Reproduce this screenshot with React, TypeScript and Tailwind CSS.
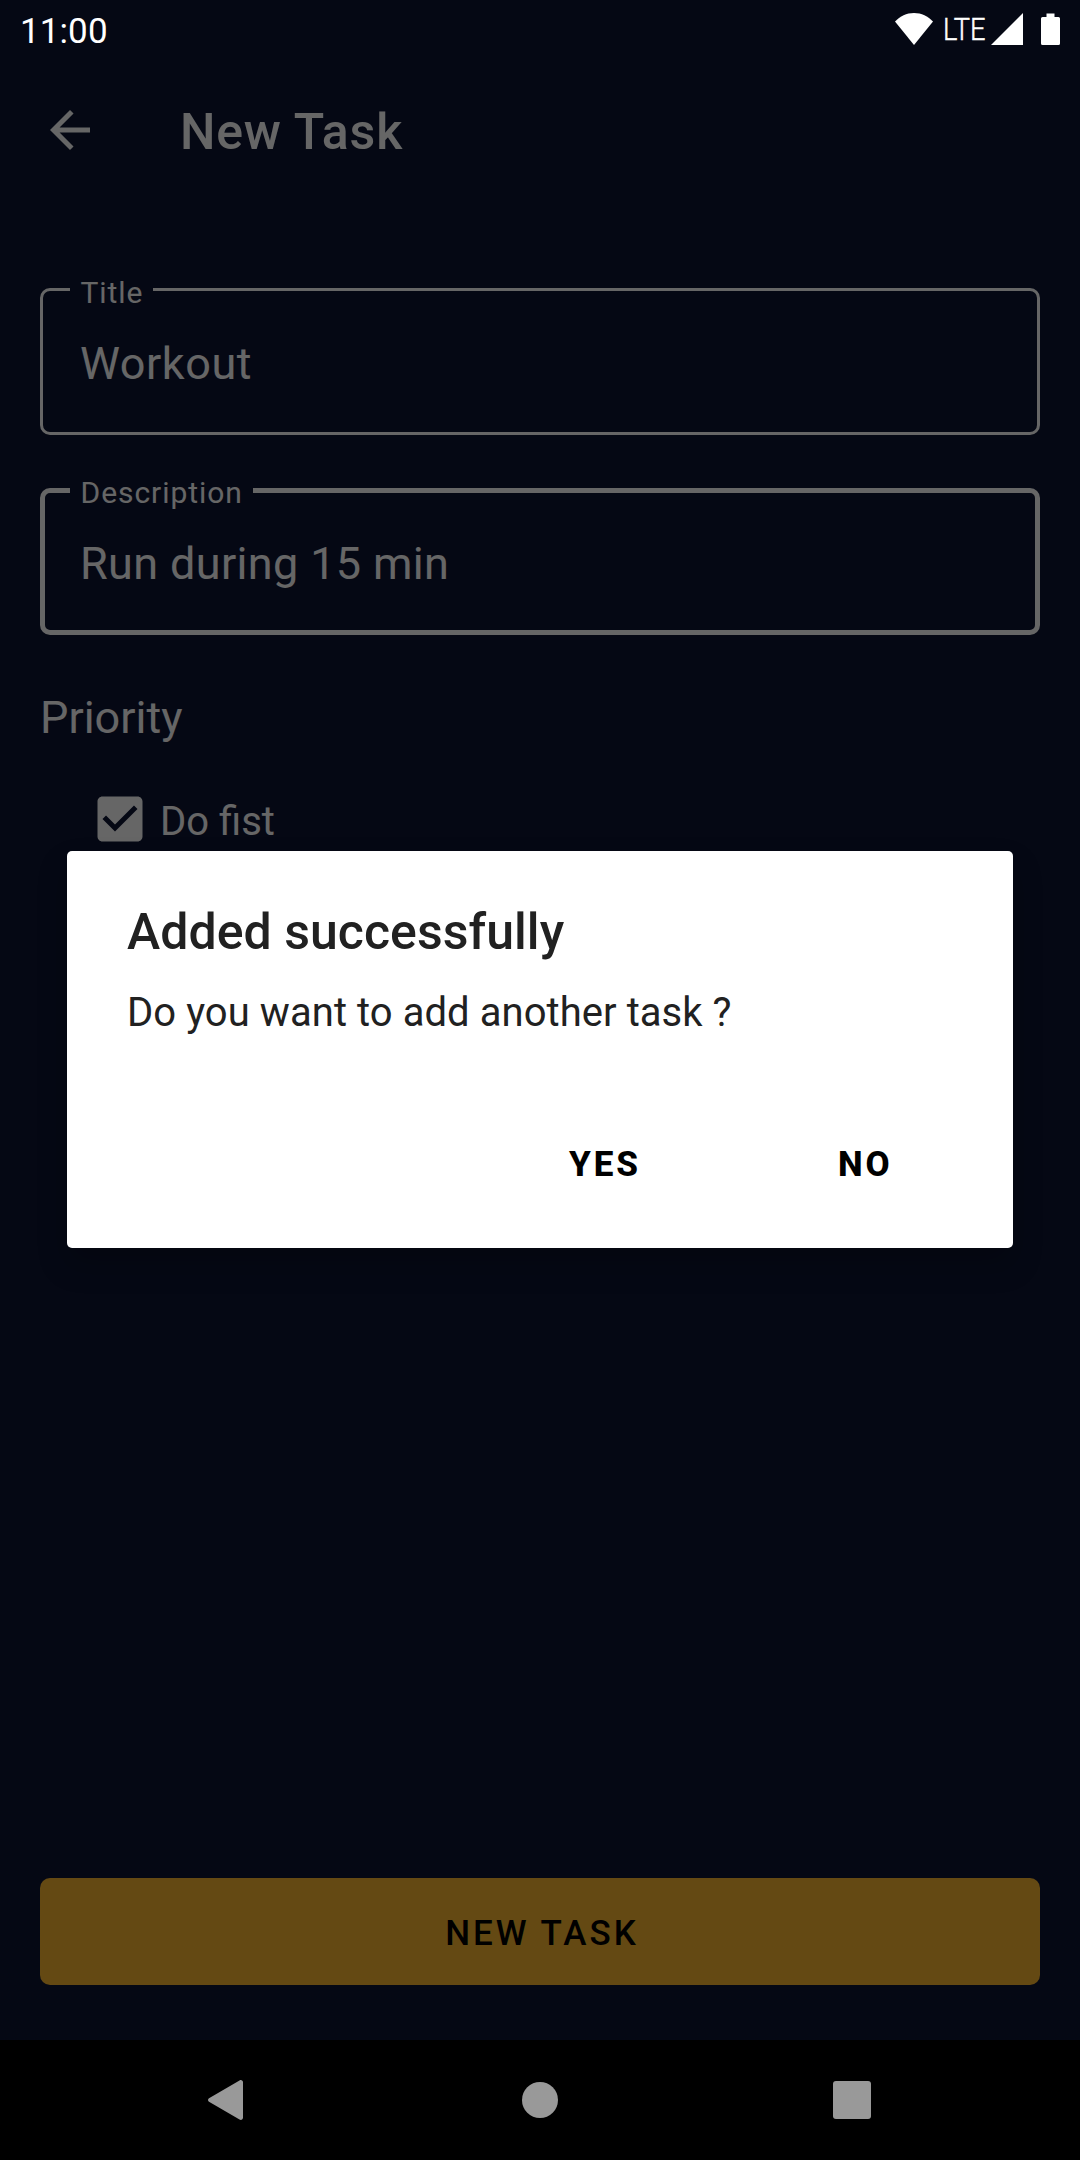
import type { ReactNode } from 'react';

function StatusBar() {
  return (
    <div className="relative z-20 flex h-[62px] items-center justify-between pl-5 pr-5 text-white">
      <span className="text-[35px] leading-[62px] tracking-[0.1px] pt-[2px]">11:00</span>
      <div className="flex h-full items-start pt-[13px]">
        <svg className="h-8 w-[38px]" viewBox="0 0 38 32" fill="currentColor">
          <path d="M19 32 0 8.6C5 3.200 11.500 0 19 0s14 3.200 19 8.600z" />
        </svg>
        <span className="ml-[10px] mr-[2px] h-8 w-[41px] whitespace-nowrap text-[32px] font-normal leading-[33px]">
          <span className="inline-block origin-left scale-x-[0.85] font-light [-webkit-text-stroke:0.5px_white]">LTE</span>
        </span>
        <svg className="ml-[5px] h-8 w-8" viewBox="0 0 32 32" fill="currentColor">
          <path d="M32 0v32H0z" />
        </svg>
        <svg className="ml-[18px] h-8 w-[19px]" viewBox="0 0 19 32" fill="currentColor">
          <path d="M5.500 0.500h8V4H17.500a1.500 1.500 0 0 1 1.500 1.500v25a1.500 1.500 0 0 1-1.500 1.500h-16A1.500 1.500 0 0 1 0 30.500v-25A1.500 1.500 0 0 1 1.500 4h4z" />
        </svg>
      </div>
    </div>
  );
}

function Field({ label, value, focused }: { label: string; value: string; focused?: boolean }) {
  return (
    <div className="relative h-[147px]">
      <div
        className={`flex h-full items-center rounded-[10px] border-white pt-1 text-[45px] leading-[53px] ${
          focused ? 'border-[5px] pl-[35px] tracking-[0.36px]' : 'border-[3px] pl-[37px] tracking-[0.55px]'
        }`}
      >
        {value}
      </div>
      <span className="absolute left-[30px] top-[-10px] bg-[#0d1433] pl-[10.5px] pr-[10px] text-[30px] leading-[30px] tracking-[0.95px]">
        {label}
      </span>
    </div>
  );
}

function DialogButton({ className, children }: { className: string; children: ReactNode }) {
  return (
    <button className={`text-[35px] font-extrabold leading-[42px] tracking-[2.9px] text-black ${className}`}>
      {children}
    </button>
  );
}

export default function App() {
  return (
    <div className="relative flex h-[2160px] w-[1080px] flex-col overflow-hidden bg-[#0d1433] font-['Roboto',sans-serif] text-white">
      <StatusBar />

      <header className="flex h-[138px] items-start pl-10">
        <svg className="mt-[38px] size-[60px]" viewBox="0 0 24 24" fill="currentColor">
          <path d="M20 11H7.830l5.590-5.590L12 4l-8 8 8 8 1.410-1.410L7.830 13H20v-2z" />
        </svg>
        <h1 className="ml-20 mt-10 text-[50px] font-medium leading-[60px] tracking-[0.8px]">New Task</h1>
      </header>

      <main className="flex flex-1 flex-col px-10 pt-[88px]">
        <div className="flex flex-col gap-[53px]">
          <Field label="Title" value="Workout" />
          <Field label="Description" value="Run during 15 min" focused />
        </div>
        <h2 className="mt-14 text-[45px] leading-[53px]">Priority</h2>
        <div className="mt-[45px] flex h-[60px] items-center pl-[50px]">
          <svg className="size-[60px]" viewBox="0 0 24 24" fill="currentColor">
            <path d="M19 3H5c-1.110 0-2 .9-2 2v14c0 1.100.89 2 2 2h14c1.110 0 2-.9 2-2V5c0-1.100-.89-2-2-2zm-9 14-5-5 1.410-1.410L10 14.170l7.590-7.590L19 8l-9 9z" />
          </svg>
          <span className="ml-[10px] pt-[5px] text-[40px] leading-[48px]">Do fist</span>
        </div>
        <button className="mb-[55px] mt-auto h-[107px] rounded-[10px] bg-[#fab730] pl-[4px] pt-[6px] text-[35px] font-medium tracking-[3px] text-black">
          NEW TASK
        </button>
      </main>

      <nav className="relative z-20 flex h-[120px] items-center bg-black text-[#999]">
        <svg className="ml-[208px] h-10 w-[35px]" viewBox="0 0 35 40" fill="currentColor">
          <path d="M1 18.200 31.500.4C33.200-.5 35 .5 35 2.400v35.200c0 1.900-1.800 2.900-3.500 2L1 21.800c-1.300-.8-1.300-2.800 0-3.600z" />
        </svg>
        <div className="ml-[279px] size-9 rounded-full bg-[#999]" />
        <div className="ml-[275px] size-[38px] rounded-[3px] bg-[#999]" />
      </nav>

      <div className="absolute inset-0 z-10 bg-black/60">
        <section className="mx-[67px] mt-[851px] flex h-[397px] w-[946px] flex-col rounded-[5px] bg-white px-[60px] text-[#212121] shadow-[0_16px_30px_rgba(0,0,0,0.22)]">
          <h3 className="mt-[51px] text-[50px] font-medium leading-[60px] tracking-[0.05px]">Added successfully</h3>
          <p className="mt-[27px] text-[40px] leading-[48px] tracking-[0.06px]">Do you want to add another task ?</p>
          <div className="mt-[107px] flex">
            <DialogButton className="ml-[442px] w-[269px] text-left">YES</DialogButton>
            <DialogButton className="text-left">NO</DialogButton>
          </div>
        </section>
      </div>
    </div>
  );
}
